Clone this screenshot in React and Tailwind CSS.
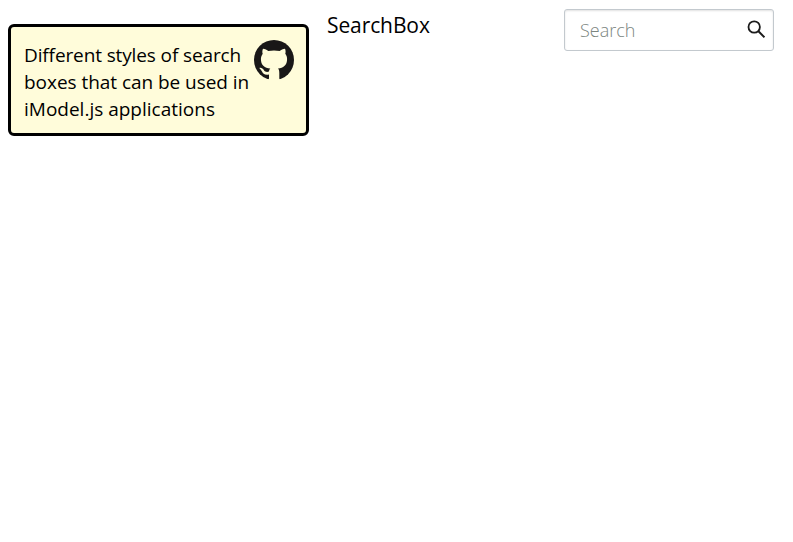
export default function App() {
  return (
    <div className="flex h-[542px] w-full items-start bg-white font-['Open_Sans','Noto_Sans',sans-serif] text-black">
      <aside className="mt-6 ml-2 flex h-28 w-[301px] shrink-0 items-start justify-between rounded-[6px] border-[3px] border-black bg-[#fffcda] pt-[13px] pr-3 pl-[13px]">
        <p className="w-[226px] pt-0.5 text-[19px] leading-[27px] whitespace-nowrap">
          <span className="block tracking-[-0.12px]">Different styles of search</span>
          <span className="block tracking-[-0.04px]">boxes that can be used in</span>
          <span className="block">iModel.js applications</span>
        </p>
        <svg className="size-10 shrink-0" viewBox="0 0 40 40" aria-hidden="true">
          <circle cx="20" cy="20" r="20" fill="#191717" />
          <path
            fill="#fffcda"
            d="M9 8.7C11 8.7 13 10 14.3 11C18 10.2 22 10.2 25.7 11C27 10 29 8.7 31 8.7C31.8 10.5 31.7 12.5 31.3 13.8C33 16 33.3 18 33 20.5C32.5 25.5 29.5 27.8 24 28.6C25 29.6 25.3 31 25.3 33V38.6L26 40H14L15 38.6V34.5C10.5 35.3 9 33.5 8 31.5C7.3 30 6 29 5.3 28C6.8 27.2 8.8 28.3 9.8 30C11 32 13 32.3 15 31.6C15.1 30.2 15.6 29.2 16.3 28.6C10.5 27.8 7.5 25.5 7 20.5C6.7 18 7.2 16 8.7 13.8C8.2 12.5 8.2 10.5 9 8.7Z"
          />
        </svg>
      </aside>
      <h1 className="mt-[9px] ml-[18px] w-[237px] shrink-0 text-[21px] leading-8 font-normal tracking-[-0.1px]">
        SearchBox
      </h1>
      <div className="mt-[9px] flex h-[42px] w-[210px] shrink-0 items-center rounded-[3px] border border-[#c3c9ce] bg-white pr-2 pl-[15px] shadow-[inset_0_1px_2px_rgba(0,0,0,0.12)]">
        <input
          type="text"
          placeholder="Search"
          aria-label="Search"
          className="min-w-0 flex-1 bg-transparent text-[18px] font-light outline-none placeholder:text-[#7b8580]"
        />
        <svg className="mb-0.5 size-[18px] shrink-0" viewBox="0 0 18 18" fill="none" stroke="#1b1b1b" aria-hidden="true">
          <circle cx="7.2" cy="7" r="5.7" strokeWidth="1.8" />
          <path d="M11.2 11 17.5 17.3" strokeWidth="2" />
        </svg>
      </div>
    </div>
  );
}
